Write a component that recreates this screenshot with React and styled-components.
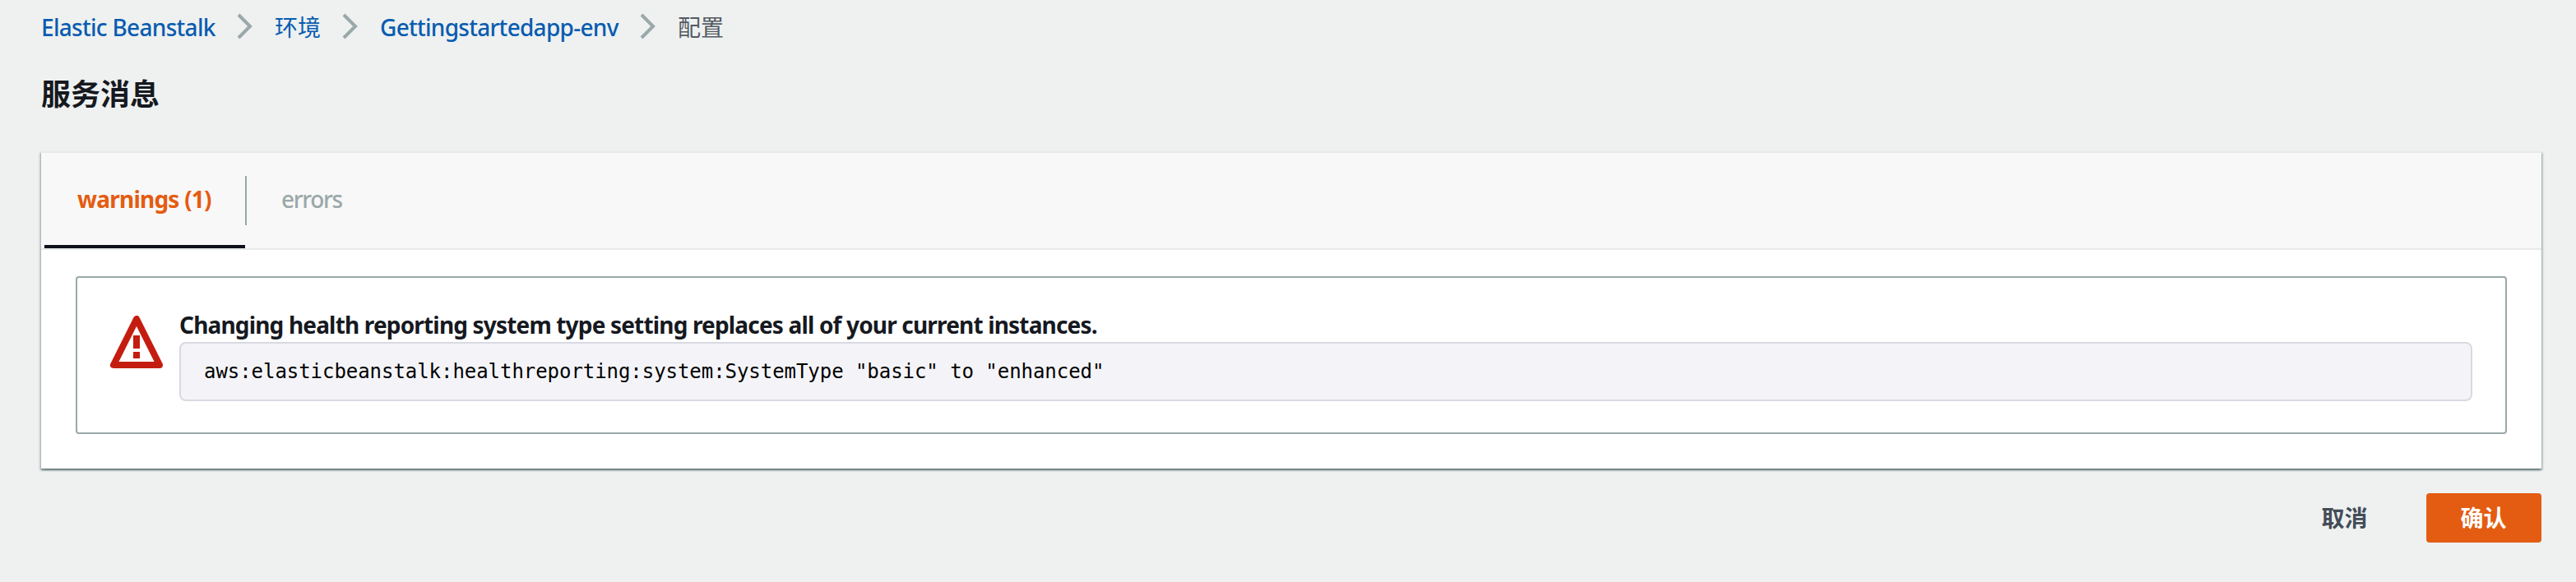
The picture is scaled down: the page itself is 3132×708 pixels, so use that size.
import React from "react";
import styled, { createGlobalStyle } from "styled-components";

const GlobalStyle = createGlobalStyle`
  * { box-sizing: border-box; }
  html { background: #eef1f0; }
  body {
    margin: 0;
    background: #eef1f0;
    color: #16191f;
    font-family: "Noto Sans", "Noto Sans CJK SC", sans-serif;
    font-size: 28px;
    line-height: 40px;
  }
`;

const Page = styled.main`
  display: flex;
  flex-direction: column;
  height: 708px;
  padding: 12px 42px 0 50px;
`;

const Breadcrumbs = styled.nav`
  display: flex;
  align-items: center;
  height: 40px;
`;

const Crumb = styled.a`
  flex: none;
  width: ${(p) => p.$width}px;
  padding-top: 2px;
  color: ${(p) => (p.$current ? "#545b64" : "#0a5cb0")};
  font-weight: ${(p) => (p.$cjk ? 400 : 500)};
  letter-spacing: ${(p) => p.$tracking || 0}px;
  white-space: nowrap;
`;

const Separator = styled.svg`
  flex: none;
  width: 18px;
  height: 30px;
  margin: 0 27px;
  overflow: visible;
  fill: none;
  stroke: #9aa8a9;
  stroke-width: 4;
`;

const Title = styled.h1`
  margin: 38px 0 0;
  height: 94px;
  font-size: 36px;
  font-weight: 700;
  line-height: 50px;
`;

const Card = styled.section`
  height: 386px;
  background: #fff;
  border-top: 2px solid #e6eae9;
  box-shadow:
    0 2px 2px 0 rgba(0, 28, 36, 0.42),
    2px 2px 2px 0 rgba(0, 28, 36, 0.16),
    -2px 2px 2px 0 rgba(0, 28, 36, 0.16);
`;

const TabBar = styled.div`
  display: flex;
  height: 118px;
  padding-left: 4px;
  background: #f8f8f8;
  border-bottom: 2px solid #e6eae9;
`;

const Tab = styled.button`
  height: 116px;
  padding: 0 0 0 ${(p) => (p.$active ? 40 : 42)}px;
  width: ${(p) => p.$width}px;
  border: 0;
  border-bottom: 4px solid ${(p) => (p.$active ? "#0f111a" : "transparent")};
  background: none;
  color: ${(p) => (p.$active ? "#e45c11" : "#9aa8a9")};
  font: inherit;
  font-weight: ${(p) => (p.$active ? 700 : 500)};
  letter-spacing: ${(p) => p.$tracking}px;
  text-align: left;
  white-space: nowrap;
`;

const TabDivider = styled.span`
  width: 2px;
  height: 60px;
  margin-top: 28px;
  background: #9aa8a9;
`;

const CardBody = styled.div`
  padding: 32px 42px;
`;

const Alert = styled.div`
  display: flex;
  gap: 20px;
  height: 192px;
  padding: 38px 40px;
  border: 2px solid #9aa8a9;
  border-radius: 4px;
`;

const WarningIcon = styled.svg`
  flex: none;
  width: 64px;
  height: 64px;
  margin-top: 8px;
`;

const AlertContent = styled.div`
  flex: 1;
`;

const AlertHeading = styled.div`
  height: 40px;
  font-weight: 700;
  line-height: 39px;
  letter-spacing: -0.83px;
  white-space: nowrap;
`;

const Code = styled.pre`
  margin: 0;
  height: 72px;
  padding: 14px 28px;
  border: 2px solid #d9d9e2;
  border-radius: 8px;
  background: #f4f4f8;
  color: #000;
  font-family: "DejaVu Sans Mono", monospace;
  font-size: 24px;
  line-height: 40px;
  letter-spacing: -0.05px;
`;

const Actions = styled.div`
  display: flex;
  justify-content: flex-end;
  gap: 30px;
  margin-top: 30px;
`;

const Button = styled.button`
  width: ${(p) => (p.$primary ? 140 : 138)}px;
  height: 60px;
  padding: 0 1px 1px 0;
  border: 0;
  border-radius: 4px;
  background: ${(p) => (p.$primary ? "#e45c11" : "transparent")};
  color: ${(p) => (p.$primary ? "#fff" : "#444c57")};
  font: inherit;
  font-weight: 700;
`;

const Chevron = () => (
  <Separator viewBox="0 0 18 30">
    <path d="M1 1L15 15L1 29" />
  </Separator>
);

export default function App() {
  return (
    <>
      <GlobalStyle />
      <Page>
        <Breadcrumbs>
          <Crumb $width={212} $tracking={-0.7}>Elastic Beanstalk</Crumb>
          <Chevron />
          <Crumb $cjk $width={56}>环境</Crumb>
          <Chevron />
          <Crumb $width={290} $tracking={-0.72}>Gettingstartedapp-env</Crumb>
          <Chevron />
          <Crumb $cjk $current $width={56}>配置</Crumb>
        </Breadcrumbs>
        <Title>服务消息</Title>
        <Card>
          <TabBar>
            <Tab $active $width={244} $tracking={-0.77}>warnings (1)</Tab>
            <TabDivider />
            <Tab $width={160} $tracking={-1.35}>errors</Tab>
          </TabBar>
          <CardBody>
            <Alert>
              <WarningIcon viewBox="0 0 64 64">
                <path d="M32 4L4 60H60Z" fill="none" stroke="#c41d10" strokeWidth="8" strokeLinejoin="round" />
                <path d="M28 24h8v16h-8zM28 44h8v8h-8z" fill="#c41d10" />
              </WarningIcon>
              <AlertContent>
                <AlertHeading>
                  Changing health reporting system type setting replaces all of your current instances.
                </AlertHeading>
                <Code>aws:elasticbeanstalk:healthreporting:system:SystemType "basic" to "enhanced"</Code>
              </AlertContent>
            </Alert>
          </CardBody>
        </Card>
        <Actions>
          <Button>取消</Button>
          <Button $primary>确认</Button>
        </Actions>
      </Page>
    </>
  );
}
